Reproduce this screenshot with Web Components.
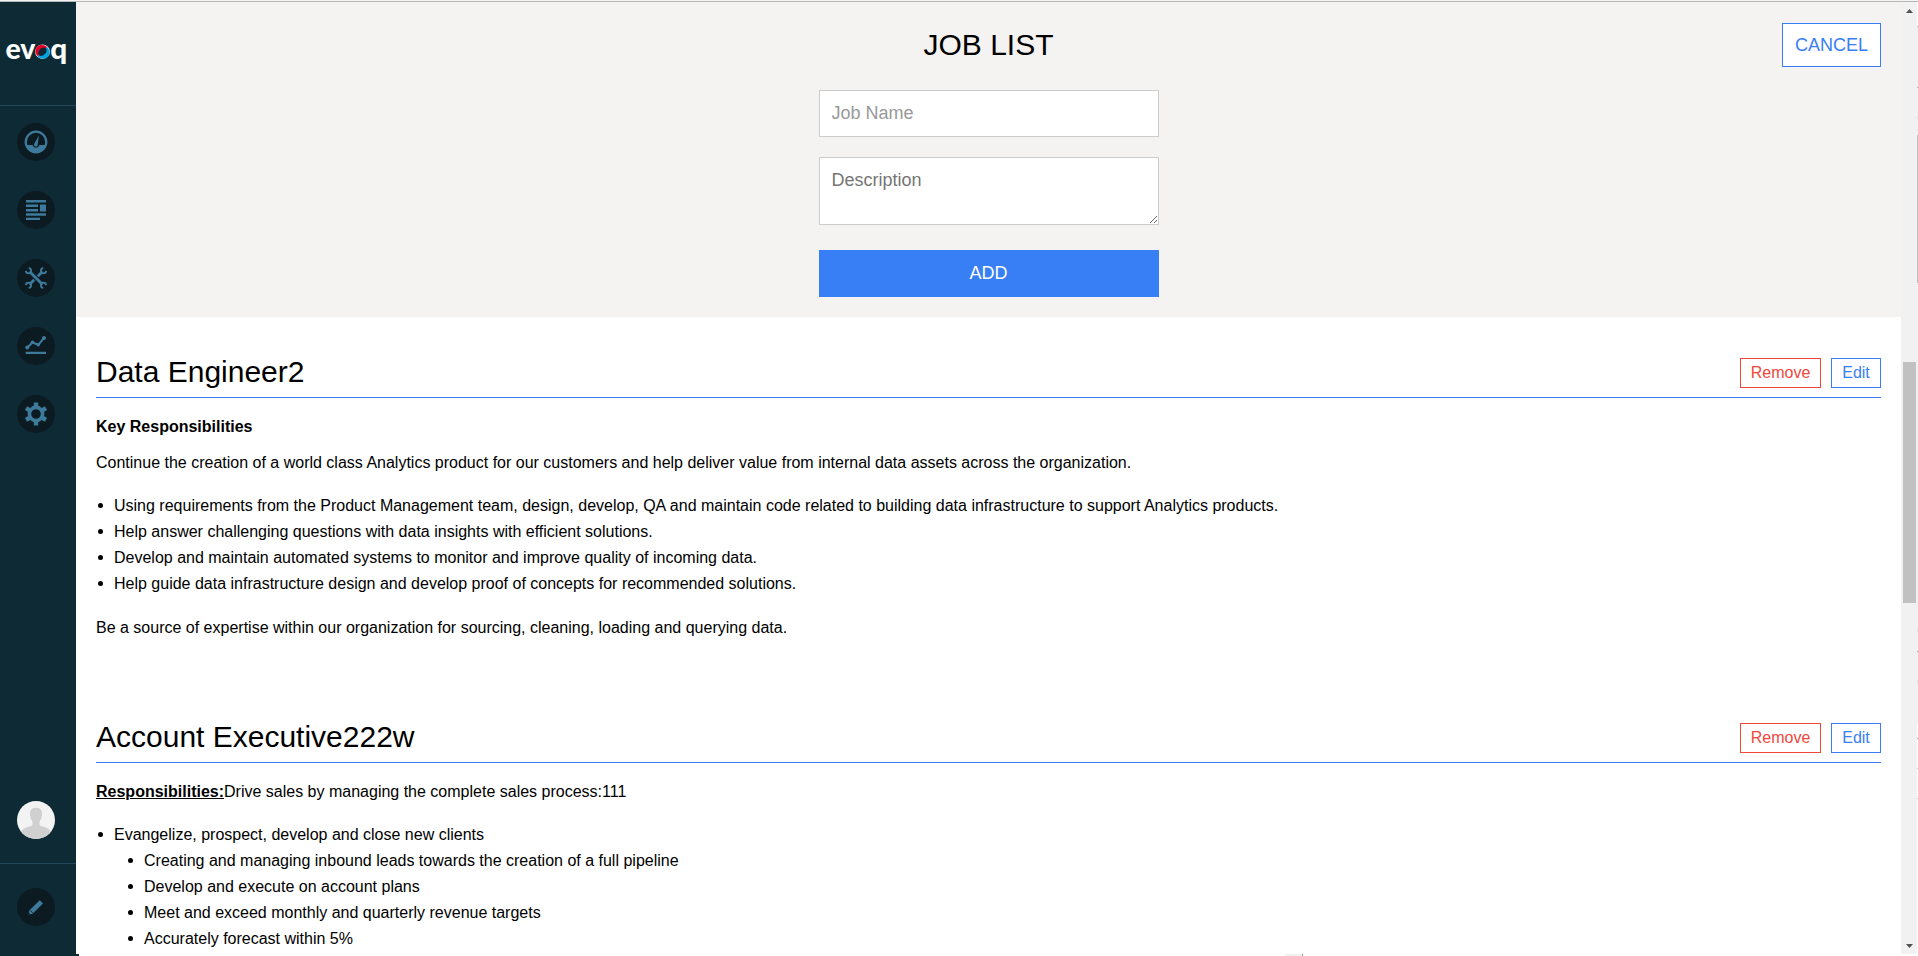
<!DOCTYPE html>
<html lang="en">
<head>
<meta charset="utf-8">
<title>Job List</title>
<style>
html,body{margin:0;height:100%;overflow:hidden}
body{font-family:"Liberation Sans",Arial,sans-serif;font-size:16px;color:#000;background:#fff}
</style>
</head>
<body>
<job-app></job-app>
<script>
function define(name, html, setup){
  const t=document.createElement('template');
  t.innerHTML=html;
  customElements.define(name,class extends HTMLElement{
    constructor(){
      super();
      this.attachShadow({mode:'open'}).appendChild(t.content.cloneNode(true));
      if(setup)setup(this,this.shadowRoot);
    }
  });
}

define('evoq-logo',`<style>
:host{display:block;height:103px;border-bottom:1px solid #24465a}
svg{display:block;width:76px;height:103px}
text{font:900 28px Lato,"Open Sans",sans-serif;fill:#fff}
</style>
<svg viewBox="0 2 76 103">
<text x="5.500" y="58.700" textLength="30" lengthAdjust="spacingAndGlyphs">ev</text>
<g fill="none" transform="rotate(-45 42.500 51.700)">
<circle cx="42.500" cy="51.700" r="7.300" fill="#fff"/>
<path d="M35.800 51.700A6.700 7.400 0 0 1 49.200 51.700Z" fill="#e4002b"/>
<path d="M49.200 51.700A6.700 7.400 0 0 1 35.800 51.700Z" fill="#00a3e0"/>
<ellipse cx="42.500" cy="51.700" rx="4.900" ry="3.400" fill="#0e2a35"/>
</g>
<text x="50.200" y="58.700" textLength="17" lengthAdjust="spacingAndGlyphs">q</text>
</svg>`);

define('nav-button',`<style>
:host{display:block;width:38px;height:38px;border-radius:50%;background:#0c1b22;overflow:hidden;color:#3d7a9c}
::slotted(svg){display:block;width:38px;height:38px}
</style><slot></slot>`);

define('app-sidebar',`<style>
:host{display:flex;flex-direction:column;width:76px;flex:none;background:#0e2a35}
nav{display:flex;flex-direction:column;gap:30px;padding:17px 0 0 17px;flex:1}
.user{padding:0 0 24px 17px;border-bottom:1px solid #24465a}
.edit{padding:24px 0 28px 17px}
</style>
<evoq-logo></evoq-logo>
<nav>
<nav-button><svg viewBox="0 0 38 38"><circle cx="19" cy="19" r="10.300" fill="none" stroke="currentColor" stroke-width="2.200"/><path d="M8.700 22H15.600A3.500 3.500 0 0 0 22.400 22H29.300A11 11 0 0 1 8.700 22Z" fill="currentColor"/><path d="M22 12.600L17.300 20.500A1.900 1.900 0 1 0 20.700 21.200Z" fill="currentColor"/></svg></nav-button>
<nav-button><svg viewBox="0 0 38 38"><path d="M9 9h20v2.500H9zM9 13.500h12v2.500H9zM9 18h12v2.500H9zM23 13.500h6v7h-6zM9 22.300h20v2.500H9zM9 26.700h14v2.300H9z" fill="currentColor"/></svg></nav-button>
<nav-button><svg viewBox="0 0 38 38"><g fill="none" stroke="currentColor"><path d="M12.500 12.500L25.500 25.500" stroke-width="2.800"/><path d="M25.500 12.500L20.800 17.200M17.200 20.800L12.500 25.500" stroke-width="2.800"/><path d="M11.700 9.100A2.600 2.600 0 1 1 8.900 11.900M26.300 9.100A2.600 2.600 0 1 0 29.100 11.900M8.900 26.100A2.600 2.600 0 1 1 11.700 28.900M29.100 26.100A2.600 2.600 0 1 0 26.300 28.900" stroke-width="1.800"/></g></svg></nav-button>
<nav-button><svg viewBox="0 0 38 38"><path d="M10.300 20.500L15.500 15.500L21.300 17.800L27 11" fill="none" stroke="currentColor" stroke-width="2"/><g fill="currentColor"><circle cx="10.300" cy="20.500" r="2"/><circle cx="15.500" cy="15.300" r="1.800"/><circle cx="21.300" cy="17.800" r="1.800"/><circle cx="27" cy="10.900" r="2"/><path d="M8.700 24.700h20.300v2.400H8.700z"/></g></svg></nav-button>
<nav-button><svg viewBox="0 0 38 38"><circle cx="19" cy="19" r="6.600" fill="none" stroke="currentColor" stroke-width="3.600"/><path d="M19 7.500V12M19 26V30.500M9 13.200L13 15.500M25 22.500L29 24.800M9 24.800L13 22.500M25 15.500L29 13.200" stroke="currentColor" stroke-width="4.400"/></svg></nav-button>
</nav>
<div class="user"><nav-button style="background:#f3f3f3"><svg viewBox="0 0 38 38"><path d="M13 12.500C13 8.800 15.500 6.800 19 6.800S25 8.800 25 12.500C25 16.500 23.800 19 22.500 20.800V24C24 26 31 25.500 33.500 30V38H4.500V30C7 25.500 14 26 15.500 24V20.800C14.200 19 13 16.500 13 12.500Z" fill="#d0d0d0"/></svg></nav-button></div>
<div class="edit"><nav-button><svg viewBox="0 0 38 38"><path d="M12.300 22.500L22.700 12.300L26 15.500L15.600 25.700L11.700 26.600Z" fill="currentColor"/><path d="M13.300 22.400L15.900 25M12 25L13.200 26.400" stroke="#0c1b22" stroke-width=".8"/></svg></nav-button></div>`);

define('outline-button',`<style>
:host{display:block;box-sizing:border-box;border:1px solid currentColor;background:#fff;color:#387ef5;font-size:16px;line-height:28px;height:30px;width:50px;text-align:center}
:host([tone=danger]){color:#ef473a;width:81px}
:host([size=large]){font-size:18px;line-height:42px;height:44px;width:99px}
</style><slot></slot>`);

define('job-form',`<style>
:host{display:grid;grid-template-columns:1fr 340px 1fr;box-sizing:border-box;height:315px;padding:21px 20px 20px;background:#f5f3f2}
.mid{grid-column:2;display:flex;flex-direction:column}
h1{font-size:30px;font-weight:400;line-height:40px;margin:2px 0 25px;text-align:center}
input,textarea,button{font:18px "Liberation Sans",Arial,sans-serif;box-sizing:border-box;width:340px;border:1px solid #ccc;border-radius:0;margin:0;background:#fff;padding:0 12px;display:block;outline:0}
input{height:47px;margin-bottom:20px}
input::placeholder{color:#999}
textarea{height:68px;margin-bottom:25px;padding-top:12px;overflow:hidden}
textarea::placeholder{color:#757575}
button{height:47px;background:#387ef5;border:0;color:#fff}
outline-button{justify-self:end}
</style>
<div class="mid"><h1>JOB LIST</h1><input placeholder="Job Name"><textarea placeholder="Description"></textarea><button>ADD</button></div>
<outline-button size="large">CANCEL</outline-button>`);

define('job-item',`<style>
:host{display:block;margin:0 20px;height:365px}
header{display:flex;align-items:flex-start;gap:10px;box-sizing:border-box;height:81px;padding-top:41px;border-bottom:1px solid #387ef5}
h2{flex:1;margin:-6px 0 0;font-size:30px;font-weight:400;line-height:40px}
.body{padding-top:16px;line-height:26px}
</style>
<header><h2></h2><outline-button tone="danger">Remove</outline-button><outline-button>Edit</outline-button></header>
<div class="body"><slot></slot></div>`,(el,r)=>{r.querySelector('h2').textContent=el.getAttribute('heading')});

define('scroll-bar',`<style>
:host{display:flex;flex-direction:column;align-items:center;width:16px;flex:none;background:#f1f1f1}
i{margin-left:1px}
.up,.down{width:7px;height:4px;background:#505050;clip-path:polygon(50% 0,100% 100%,0 100%)}
.up{margin-top:7px;margin-bottom:349px}
.down{clip-path:polygon(0 0,100% 0,50% 100%);margin-top:auto;margin-bottom:6px}
.thumb{width:13px;height:241px;background:#c1c1c1}
</style><i class="up"></i><i class="thumb"></i><i class="down"></i>`);

define('job-app',`<style>
:host{display:flex;flex-direction:column;box-sizing:border-box;width:1918px;height:956px;border-top:1px solid #f4f4f4;overflow:hidden}
.frame{display:flex;flex:none;box-sizing:border-box;height:953px;border-top:1px solid #b6b6b6}
main{flex:1;min-width:0;overflow:hidden;height:952px}
p{margin:0 0 10px}
ul{list-style:none;margin:17px 0 18px;padding:0 0 0 18px}
ul ul{margin:0;padding-left:30px}
li::before{content:"";display:inline-block;width:5px;height:5px;border-radius:50%;background:#000;margin:0 11px 0 -16px;vertical-align:3px}
.edge{width:1px;background:
 linear-gradient(#c1c1c1,#c1c1c1) 0 133px/1px 148px no-repeat,
 linear-gradient(#aaa,#aaa) 0 24px/1px 1px no-repeat,
 linear-gradient(#aaa,#aaa) 0 85px/1px 1px no-repeat,
 linear-gradient(#ccc,#ccc) 0 115px/1px 1px no-repeat,
 linear-gradient(#ccc,#ccc) 0 628px/1px 1px no-repeat,
 linear-gradient(#999,#999) 0 649px/1px 1px no-repeat,
 linear-gradient(#ccc,#ccc) 0 679px/1px 1px no-repeat,
 linear-gradient(#999,#999) 0 736px/1px 1px no-repeat,
 linear-gradient(#ccc,#ccc) 0 766px/1px 1px no-repeat,
 linear-gradient(#ccc,#ccc) 0 796px/1px 1px no-repeat,
 linear-gradient(#f1f1f1,#f1f1f1) 0 25px/1px 696px no-repeat,#fff}
.strip{display:flex;height:2px}
.strip i{width:79px;background:#0e2a35}
.strip b{width:17px;margin-left:1206px;background:#f1f1f1;border-right:1px solid #999}
</style>
<div class="frame">
<app-sidebar></app-sidebar>
<main>
<job-form></job-form>
<job-item heading="Data Engineer2">
<p><b>Key Responsibilities</b></p>
<p>Continue the creation of a world class Analytics product for our customers and help deliver value from internal data assets across the organization.</p>
<ul><li>Using requirements from the Product Management team, design, develop, QA and maintain code related to building data infrastructure to support Analytics products.</li><li>Help answer challenging questions with data insights with efficient solutions.</li><li>Develop and maintain automated systems to monitor and improve quality of incoming data.</li><li>Help guide data infrastructure design and develop proof of concepts for recommended solutions.</li></ul>
<p>Be a source of expertise within our organization for sourcing, cleaning, loading and querying data.</p>
</job-item>
<job-item heading="Account Executive222w">
<p><b><u>Responsibilities:</u></b>Drive sales by managing the complete sales process:111</p>
<ul><li>Evangelize, prospect, develop and close new clients<ul><li>Creating and managing inbound leads towards the creation of a full pipeline</li><li>Develop and execute on account plans</li><li>Meet and exceed monthly and quarterly revenue targets</li><li>Accurately forecast within 5%</li></ul></li></ul>
</job-item>
</main>
<scroll-bar></scroll-bar>
<div class="edge"></div>
</div>
<div class="strip"><i></i><b></b></div>`);
</script>
</body>
</html>
